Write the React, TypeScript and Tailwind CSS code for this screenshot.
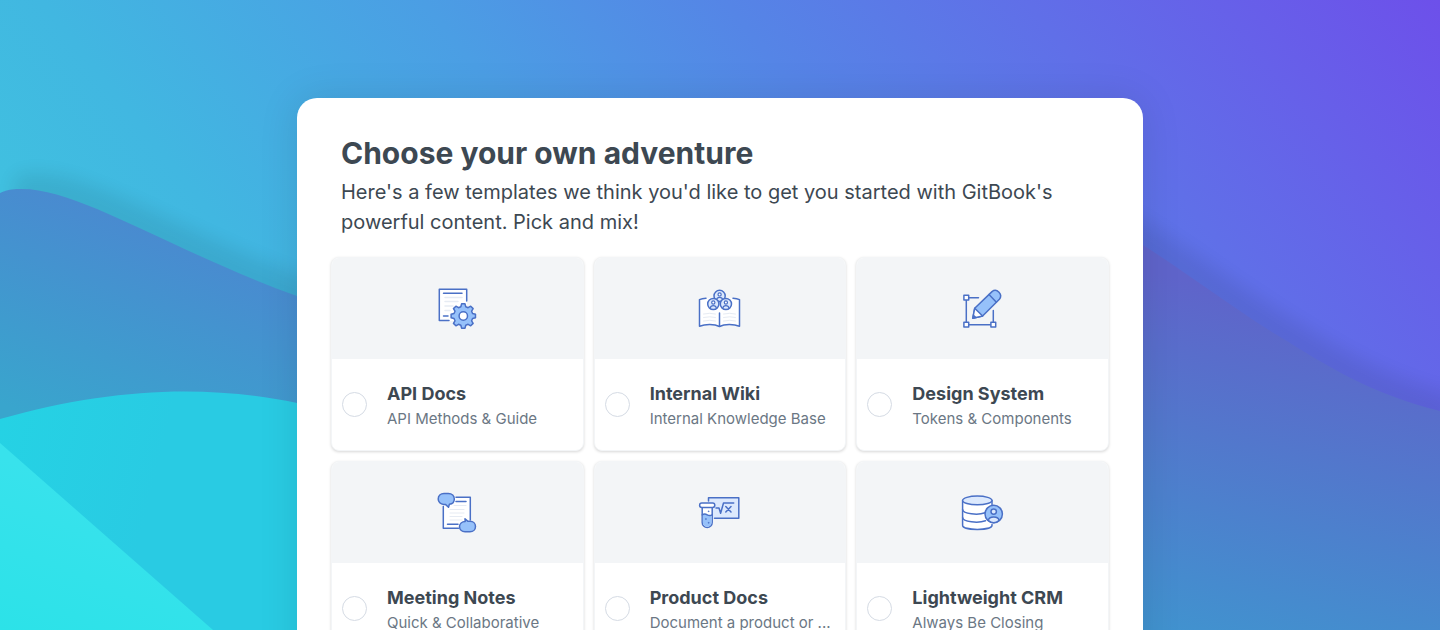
import type { ReactNode } from 'react'

const INK = '#4a70c6'
const SKY = '#96c1fa'
const PALE = '#dce9fd'
const RULE = '#e6ebf3'

function gearPath(cx: number, cy: number) {
  const points: string[] = []
  const shape: [number, number][] = [
    [-15, 9.6],
    [-8, 12.3],
    [8, 12.3],
    [15, 9.6],
  ]
  for (let tooth = 0; tooth < 8; tooth++) {
    for (const [offset, radius] of shape) {
      const angle = ((tooth * 45 + offset) * Math.PI) / 180
      points.push(`${(cx + radius * Math.cos(angle)).toFixed(2)} ${(cy + radius * Math.sin(angle)).toFixed(2)}`)
    }
  }
  return `M${points.join('L')}Z`
}

function Icon({ children }: { children: ReactNode }) {
  return (
    <svg
      className="h-14 w-16"
      viewBox="0 0 64 56"
      fill="none"
      stroke={INK}
      strokeWidth="1.5"
      strokeLinejoin="round"
      strokeLinecap="round"
      aria-hidden="true"
    >
      {children}
    </svg>
  )
}

function ApiIcon() {
  return (
    <Icon>
      <path d="M14 9h28v32H14z" fill="#fff" stroke="none" />
      <path d="M41.7 21V9.3H14.3V40.6H24" />
      <path d="M18.5 13.3H37" />
      <path d="M20 17.5H37M20 21.5H33M20 26H28M20 30.5H25" stroke={RULE} />
      <path d="M18.5 36H23" />
      <path d={gearPath(38.3, 36)} fill={SKY} />
      <circle cx="38.3" cy="36" r="4.2" fill="#fff" />
    </Icon>
  )
}

function Person({ cx, cy }: { cx: number; cy: number }) {
  return (
    <g>
      <circle cx={cx} cy={cy} r="5.6" fill={PALE} />
      <circle cx={cx} cy={cy - 1.5} r="1.6" fill="#fff" strokeWidth="1.2" />
      <path d={`M${cx - 3} ${cy + 3.8}C${cx - 2.5} ${cy + 0.8} ${cx + 2.5} ${cy + 0.8} ${cx + 3} ${cy + 3.8}`} strokeWidth="1.2" />
    </g>
  )
}

function WikiIcon() {
  return (
    <Icon>
      <path
        d="M11.5 19.5C17 17.5 26 17 31.5 20C37 17 46 17.5 51.5 19.5V46.3C46 44 37 43.5 31.5 46.5C26 43.5 17 44 11.5 46.3Z"
        fill="#fff"
        stroke="none"
      />
      <path d="M18 18.2Q14 18.4 11.5 19.6V46.3C17 44 26 43.5 31.5 46.5C37 43.5 46 44 51.5 46.3V19.6Q49 18.4 45 18.2" />
      <path d="M31.5 33V46" />
      <path
        d="M15.5 34Q22 32.5 27.5 34M15.5 37.5Q22 36 27.5 37.5M15.5 41Q22 39.5 27.5 41M35.5 34Q42 32.5 47.5 34M35.5 37.5Q42 36 47.5 37.5M35.5 41Q42 39.5 47.5 41"
        stroke={RULE}
        strokeWidth="1"
      />
      <Person cx={31.6} cy={15.9} />
      <Person cx={25.3} cy={24} />
      <Person cx={37.9} cy={24} />
    </Icon>
  )
}

function DesignIcon() {
  return (
    <Icon>
      <path d="M15.3 17.7H27.5M15.3 17.7V44.7H42.3V30.5" />
      <path d="M12.9 15.3h4.8v4.8h-4.8zM12.9 42.3h4.8v4.8h-4.8zM39.9 42.3h4.8v4.8h-4.8z" fill="#fff" />
      <path d="M23.7 28.3L41 11.6Q44.6 8.8 48 12.2Q51.2 15.6 48.4 19.2L31.6 36L21.8 38.2Z" fill={SKY} />
      <path d="M23.7 28.3L31.6 36L21.8 38.2Z" fill="#fff" />
      <path d="M38 14.6L45.4 22.2" />
      <path d="M22.6 34.4L25.6 37.3L21.8 38.2Z" fill={INK} stroke="none" />
    </Icon>
  )
}

function NotesIcon() {
  return (
    <Icon>
      <path d="M18.3 13.3h27v31h-27z" fill="#fff" stroke="none" />
      <path d="M31 13.3H45.3V36M18.3 22.5V44.3H33.5" />
      <path d="M31 17.5H41M22.5 40.3H33" />
      <path d="M29 21.5H41M25 25.5H39M25 29H39M25 32.5H37M25 36H37" stroke={RULE} strokeWidth="1" />
      <path
        d="M19 9.5H23.3C27 9.5 29.3 12 29.3 15C29.3 17.8 27.3 20 24.4 20.3L23.5 23.2L20.4 20.4H18.7C15.5 20.4 13.2 18 13.2 15C13.2 12 15.5 9.5 19 9.5Z"
        fill={SKY}
      />
      <path
        d="M40.2 37.5L40 34.8L43 37.3H45C48.2 37.3 50.5 39.6 50.5 42.5C50.5 45.6 48.2 47.8 45 47.8H40C36.8 47.8 34.5 45.6 34.5 42.6C34.5 39.8 37 37.6 40.2 37.5Z"
        fill={SKY}
      />
    </Icon>
  )
}

function ProductIcon() {
  return (
    <Icon>
      <path d="M20.5 13.7H50.8V34.3H20.5Z" fill={PALE} stroke="none" />
      <path d="M20.5 17V13.7H50.8V34.3H26.5" />
      <path d="M28 24H31L32.6 29.3L35.5 19H45.7M37.8 22.6L43 28M43 22.6L37.8 28" />
      <path d="M14.2 23H24.2V38.5A5 5 0 0 1 14.2 38.5Z" fill="#fff" />
      <path d="M14.8 30.8Q17 29.4 19.2 30.8T23.6 30.8V38.3A4.4 4.4 0 0 1 14.8 38.3Z" fill={SKY} stroke="none" />
      <path d="M14.2 30.8Q16.7 29.4 19.2 30.8T24.2 30.8" />
      <rect x="11.6" y="19" width="15.2" height="4.4" rx="2.2" fill="#fff" />
      <circle cx="20.5" cy="27.3" r=".5" fill={INK} strokeWidth=".5" />
      <circle cx="17.8" cy="35" r=".5" fill={INK} strokeWidth=".5" />
      <circle cx="20.5" cy="38.8" r=".5" fill={INK} strokeWidth=".5" />
    </Icon>
  )
}

function CrmIcon() {
  return (
    <Icon>
      <path d="M11.6 16.5V41C11.6 47 41 47 41 41V16.5Z" fill="#fff" stroke="none" />
      <path d="M41 40.5V41.2C41 46.8 11.6 46.8 11.6 41.2V16.5M41 16.5V21" />
      <path d="M11.6 25.5C12 30 27 31.5 34 28.8M11.6 33.5C12 38 27 39.5 34.5 36.8" />
      <ellipse cx="26.3" cy="16.4" rx="14.7" ry="4.3" fill={PALE} />
      <circle cx="42.7" cy="30" r="8.7" fill={SKY} />
      <circle cx="42.7" cy="27.6" r="2.7" fill={PALE} />
      <path d="M37.4 36.5C38 31.8 47.4 31.8 48 36.5Q42.7 40.8 37.4 36.5Z" fill={PALE} />
    </Icon>
  )
}

const templates = [
  { id: 'api-docs', title: 'API Docs', detail: 'API Methods & Guide', icon: <ApiIcon /> },
  { id: 'internal-wiki', title: 'Internal Wiki', detail: 'Internal Knowledge Base', icon: <WikiIcon /> },
  { id: 'design-system', title: 'Design System', detail: 'Tokens & Components', icon: <DesignIcon /> },
  { id: 'meeting-notes', title: 'Meeting Notes', detail: 'Quick & Collaborative', icon: <NotesIcon /> },
  { id: 'product-docs', title: 'Product Docs', detail: 'Document a product or ...', icon: <ProductIcon /> },
  { id: 'lightweight-crm', title: 'Lightweight CRM', detail: 'Always Be Closing', icon: <CrmIcon /> },
]

const LEFT_HILL = 'M0 193C8 189 15 189 22 189C80 189 170 250 297 296C400 330 500 340 600 340V630H0Z'
const RIGHT_HILL = 'M600 630V340C800 200 1000 150 1143 245C1190 275 1230 306 1277 335C1330 368 1372 394 1440 411V630Z'

function Backdrop() {
  return (
    <svg className="absolute inset-0 h-full w-full" viewBox="0 0 1440 630" preserveAspectRatio="none" aria-hidden="true">
      <defs>
        <linearGradient id="sky" gradientUnits="userSpaceOnUse" x1="-91" y1="73" x2="878" y2="-702">
          <stop offset="0" stopColor="#40c0e0" />
          <stop offset="0.12" stopColor="#41b7e1" />
          <stop offset="0.36" stopColor="#4b9ee4" />
          <stop offset="0.55" stopColor="#5585e6" />
          <stop offset="0.74" stopColor="#606fe8" />
          <stop offset="1" stopColor="#6d50ea" />
        </linearGradient>
        <linearGradient id="leftHill" gradientUnits="userSpaceOnUse" x1="150" y1="215" x2="70" y2="430">
          <stop offset="0" stopColor="#4a89d0" />
          <stop offset="1" stopColor="#39a5cd" />
        </linearGradient>
        <linearGradient id="rightHill" gradientUnits="userSpaceOnUse" x1="1230" y1="290" x2="1150" y2="640">
          <stop offset="0" stopColor="#5f64ca" />
          <stop offset="1" stopColor="#4094cf" />
        </linearGradient>
        <linearGradient id="lagoon" gradientUnits="userSpaceOnUse" x1="0" y1="420" x2="160" y2="460">
          <stop offset="0" stopColor="#25d2e4" />
          <stop offset="1" stopColor="#29cbe3" />
        </linearGradient>
        <linearGradient id="shore" gradientUnits="userSpaceOnUse" x1="60" y1="480" x2="0" y2="630">
          <stop offset="0" stopColor="#38e2ec" />
          <stop offset="1" stopColor="#2ce2e8" />
        </linearGradient>
        <filter id="soft" x="-10%" y="-20%" width="120%" height="140%">
          <feGaussianBlur stdDeviation="9" />
        </filter>
      </defs>
      <rect width="1440" height="630" fill="url(#sky)" />
      <g filter="url(#soft)" opacity="0.08" transform="translate(14 -16)">
        <path d={LEFT_HILL} />
        <path d={RIGHT_HILL} />
      </g>
      <path d={LEFT_HILL} fill="url(#leftHill)" />
      <path d={RIGHT_HILL} fill="url(#rightHill)" />
      <path d="M0 419C110 388 205 384 297 403C380 420 450 460 520 630H0Z" fill="url(#lagoon)" />
      <path d="M0 443L213 630H0Z" fill="url(#shore)" />
    </svg>
  )
}

export default function App() {
  return (
    <div className="relative h-screen overflow-hidden font-['Inter',sans-serif]">
      <Backdrop />
      <main className="relative mx-auto mt-[98px] max-w-[846px] rounded-[20px] bg-white px-[34px] pt-[35px] pb-10 shadow-[0_0_40px_rgba(0,0,0,0.1)]">
        <header className="px-[10px] text-[#3d4852]">
          <h1 className="text-[30px] leading-10 font-bold">Choose your own adventure</h1>
          <p className="mt-1 text-[20px] leading-[30px]">
            Here's a few templates we think you'd like to get you started with GitBook's powerful content. Pick and mix!
          </p>
        </header>
        <div className="mt-5 grid grid-cols-3 gap-[10px]">
          {templates.map((template) => (
            <label
              key={template.id}
              htmlFor={template.id}
              className="flex cursor-pointer flex-col overflow-hidden rounded-lg border border-[#f3f5f7] bg-white shadow-[0_1px_3px_rgba(0,0,0,0.16)]"
            >
              <span className="flex h-[101px] items-center justify-center bg-[#f3f5f7] pb-px">{template.icon}</span>
              <span className="flex h-[91px] items-center gap-5 px-[10px]">
                <input
                  id={template.id}
                  type="radio"
                  name="template"
                  className="size-[25px] shrink-0 appearance-none rounded-full border border-[#d5dbe4] bg-white checked:border-8 checked:border-[#3f66bf]"
                />
                <span className="flex min-w-0 flex-col pt-[3px] whitespace-nowrap">
                  <span className="text-[18px] leading-[26px] font-bold text-[#3d4852]">{template.title}</span>
                  <span className="text-[15px] leading-6 text-[#6b7784]">{template.detail}</span>
                </span>
              </span>
            </label>
          ))}
        </div>
      </main>
    </div>
  )
}
